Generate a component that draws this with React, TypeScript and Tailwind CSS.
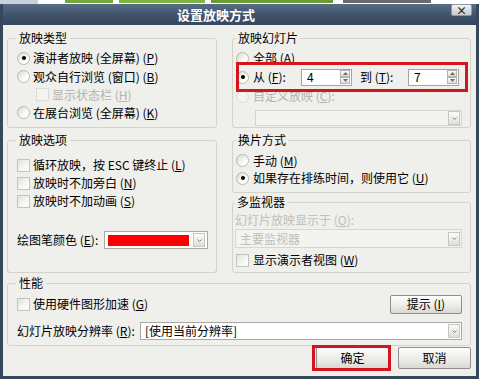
import React from "react";

function K({ c }: { c: string }) {
  return (
    <>
      (<span className="underline">{c}</span>)
    </>
  );
}

function Radio({ on, off }: { on?: boolean; off?: boolean }) {
  return (
    <span
      className={`flex h-[13px] w-[13px] shrink-0 items-center justify-center rounded-full border ${
        off
          ? "border-[#dcdcd6] bg-[#f3f3ef]"
          : "border-[#b9b9b3] bg-[linear-gradient(135deg,#d8d8d2,#ffffff_70%)]"
      }`}
    >
      {on && <span className="h-[4px] w-[4px] rounded-full bg-black" />}
    </span>
  );
}

function Check({ off }: { off?: boolean }) {
  return (
    <span
      className={`h-[13px] w-[13px] shrink-0 border ${
        off
          ? "border-[#dcdcd6] bg-[#f3f3ef]"
          : "border-[#c4c4be] bg-[linear-gradient(135deg,#e2e2dc,#fbfbf9_75%)]"
      }`}
    />
  );
}

function DropBtn() {
  return (
    <span className="ml-auto flex h-[14px] w-[12px] shrink-0 items-center justify-center border border-[#c6c6c0] bg-[linear-gradient(#fbfbfb,#e0e0da)]">
      <svg width="5" height="3" viewBox="0 0 5 3">
        <path d="M0.5 0.5 L2.5 2.5 L4.5 0.5" fill="none" stroke="#7c7c7c" strokeWidth="1" />
      </svg>
    </span>
  );
}

function SpinBtn({ up }: { up?: boolean }) {
  return (
    <span className="flex h-[7px] w-[10px] items-center justify-center border border-[#b4b4ae] bg-[linear-gradient(#fbfbfb,#dedede)]">
      <svg width="5" height="3" viewBox="0 0 5 3">
        <path d={up ? "M0 3 L2.5 0 L5 3 Z" : "M0 0 L2.5 3 L5 0 Z"} fill="#6c6c6c" />
      </svg>
    </span>
  );
}

function Spin({ value }: { value: string }) {
  return (
    <div className="flex h-[17px] w-[51px] items-center justify-between border border-[#a4a4a0] bg-white pl-[5px] pr-[1px]">
      <span>{value}</span>
      <div className="flex flex-col">
        <SpinBtn up />
        <SpinBtn />
      </div>
    </div>
  );
}

function Group({
  title,
  className,
  legend,
  children,
}: {
  title: string;
  className: string;
  legend: string;
  children: React.ReactNode;
}) {
  return (
    <fieldset className={`rounded-[3px] border border-[#d3d3cc] ${className}`}>
      <legend className={`text-[12px] leading-[14px] ${legend}`}>{title}</legend>
      {children}
    </fieldset>
  );
}

function Button({ children }: { children: React.ReactNode }) {
  return (
    <div className="flex h-full w-full items-center justify-center rounded-[2px] border border-[#8f8f8a] bg-[linear-gradient(#fdfdfd,#ecece8_55%,#d9d9d4)] text-[12px]">
      {children}
    </div>
  );
}

export default function App() {
  return (
    <div className="flex h-[379px] w-[479px] flex-col overflow-hidden bg-white font-['Noto_Sans_CJK_SC','Noto_Sans',sans-serif] text-[12px] leading-[14px] text-black">
      {/* background behind the dialog */}
      <div className="flex h-[4px] shrink-0 items-start">
        <span className="h-[4px] w-[38px] bg-[#c9d3de]" />
        <span className="ml-[27px] h-[3px] w-[48px] bg-[#73a83a]" />
        <span className="ml-[6px] h-[3px] w-[86px] bg-[#7fb444]" />
        <span className="ml-[6px] h-[3px] w-[122px] bg-[#6a9e34]" />
        <span className="ml-[10px] h-[3px] w-[88px] bg-[#6b6b6b]" />
      </div>

      <div className="flex flex-1 flex-col border-x-[3px] border-b-[3px] border-[#37475c]">
        {/* title bar */}
        <div className="flex h-[21px] shrink-0 items-center bg-[linear-gradient(#5a6d86,#43566f_45%,#35475e)]">
          <span className="ml-[174px] text-[13px] font-bold leading-[15px] text-white">
            设置放映方式
          </span>
          <span className="ml-auto mr-[4px] -mt-[9px] flex h-[12px] w-[21px] items-center justify-center rounded-[2px] border border-[#8d99a8] bg-[linear-gradient(#f2f2f2,#c6c9ce)] text-[11px] font-bold leading-[11px] text-[#2a2a2a]">
            ×
          </span>
        </div>

        {/* body */}
        <div className="flex flex-1 flex-col bg-[#efefeb] pl-[4px] pr-[5px] pt-[6px]">
          <div className="flex gap-[15px]">
            <Group title="放映类型" className="h-[97px] w-[210px] pl-[9px]" legend="ml-[-1px] px-[3px]">
              <div className="mt-[4px] flex h-[18px] items-center gap-[3px]">
                <Radio on />
                <span>演讲者放映 (全屏幕) <K c="P" /></span>
              </div>
              <div className="flex h-[19px] items-center gap-[3px]">
                <Radio />
                <span>观众自行浏览 (窗口) <K c="B" /></span>
              </div>
              <div className="flex h-[17px] items-center gap-[3px] pl-[19px] text-[#b4b4ac]">
                <Check off />
                <span>显示状态栏 <K c="H" /></span>
              </div>
              <div className="flex h-[19px] items-center gap-[3px]">
                <Radio />
                <span>在展台浏览 (全屏幕) <K c="K" /></span>
              </div>
            </Group>

            <Group title="放映幻灯片" className="h-[97px] w-[239px] pl-[3px] pr-[1px]" legend="px-[2px]">
              <div className="mt-[4px] flex h-[18px] items-center gap-[4px]">
                <Radio />
                <span>全部 <K c="A" /></span>
              </div>
              <div className="relative flex h-[20px] items-center">
                <Radio on />
                <span className="ml-[4px] w-[48px]">从 <K c="F" />:</span>
                <Spin value="4" />
                <span className="ml-[8px] w-[48px]">到 <K c="T" />:</span>
                <Spin value="7" />
                <span className="absolute -bottom-[5px] -top-[5px] left-0 right-[1px] border-[3px] border-[#d3161e]" />
              </div>
              <div className="flex h-[18px] items-center gap-[4px] text-[#b4b4ac]">
                <Radio off />
                <span>自定义放映 <K c="C" />:</span>
              </div>
              <div className="ml-[19px] mt-[5px] flex h-[16px] w-[207px] items-center border border-[#d6d6d0] bg-[#f3f3ef] pr-[1px]">
                <DropBtn />
              </div>
            </Group>
          </div>

          <div className="mt-[5px] flex gap-[15px]">
            <Group title="放映选项" className="h-[140px] w-[210px] pl-[9px]" legend="ml-[-1px] px-[3px]">
              <div className="mt-[9px] flex h-[18px] items-center gap-[3px]">
                <Check />
                <span>循环放映，按 ESC 键终止 <K c="L" /></span>
              </div>
              <div className="flex h-[18px] items-center gap-[3px]">
                <Check />
                <span>放映时不加旁白 <K c="N" /></span>
              </div>
              <div className="flex h-[18px] items-center gap-[3px]">
                <Check />
                <span>放映时不加动画 <K c="S" /></span>
              </div>
              <div className="mt-[21px] flex h-[18px] items-center">
                <span className="w-[87px]">绘图笔颜色 <K c="E" />:</span>
                <div className="flex h-[18px] w-[104px] items-center border border-[#a8a8a4] bg-white pl-[3px] pr-[2px]">
                  <span className="h-[11px] w-[81px] bg-[#ff0000]" />
                  <DropBtn />
                </div>
              </div>
            </Group>

            <div className="flex w-[239px] flex-col">
              <Group title="换片方式" className="h-[60px] pl-[3px]" legend="px-[2px]">
                <div className="mt-[5px] flex h-[17px] items-center gap-[4px]">
                  <Radio />
                  <span>手动 <K c="M" /></span>
                </div>
                <div className="flex h-[18px] items-center gap-[4px]">
                  <Radio on />
                  <span>如果存在排练时间，则使用它 <K c="U" /></span>
                </div>
              </Group>
              <Group title="多监视器" className="mt-[2px] h-[78px] pl-[2px] pr-[8px]" legend="px-[2px]">
                <div className="mt-[2px] flex h-[18px] items-center text-[#c0c0b8]">
                  幻灯片放映显示于 <K c="O" />:
                </div>
                <div className="flex h-[19px] items-center border border-[#d6d6d0] bg-[#f3f3ef] pl-[4px] pr-[1px] text-[#c0c0b8]">
                  <span>主要监视器</span>
                  <DropBtn />
                </div>
                <div className="mt-[3px] flex h-[18px] items-center gap-[4px] pl-[1px]">
                  <Check />
                  <span>显示演示者视图 <K c="W" /></span>
                </div>
              </Group>
            </div>
          </div>

          <Group title="性能" className="mt-[3px] h-[70px] pl-[9px] pr-[8px]" legend="ml-[-1px] px-[3px]">
            <div className="mt-[4px] flex h-[20px] items-center gap-[3px]">
              <Check />
              <span>使用硬件图形加速 <K c="G" /></span>
              <div className="ml-auto h-[19px] w-[72px]">
                <Button>
                  提示 <K c="I" />
                </Button>
              </div>
            </div>
            <div className="mt-[8px] flex h-[18px] items-center">
              <span className="w-[123px]">幻灯片放映分辨率 <K c="R" />:</span>
              <div className="flex h-[18px] flex-1 items-center border border-[#a8a8a4] bg-white pl-[4px] pr-[1px]">
                <span>[使用当前分辨率]</span>
                <DropBtn />
              </div>
            </div>
          </Group>

          <div className="mt-[1px] flex h-[22px] justify-end gap-[9px]">
            <div className="relative w-[73px]">
              <Button>确定</Button>
              <span className="absolute -bottom-[2px] -left-[4px] -right-[2px] -top-[2px] border-[3px] border-[#d3161e]" />
            </div>
            <div className="w-[73px]">
              <Button>取消</Button>
            </div>
          </div>
        </div>
      </div>
    </div>
  );
}
